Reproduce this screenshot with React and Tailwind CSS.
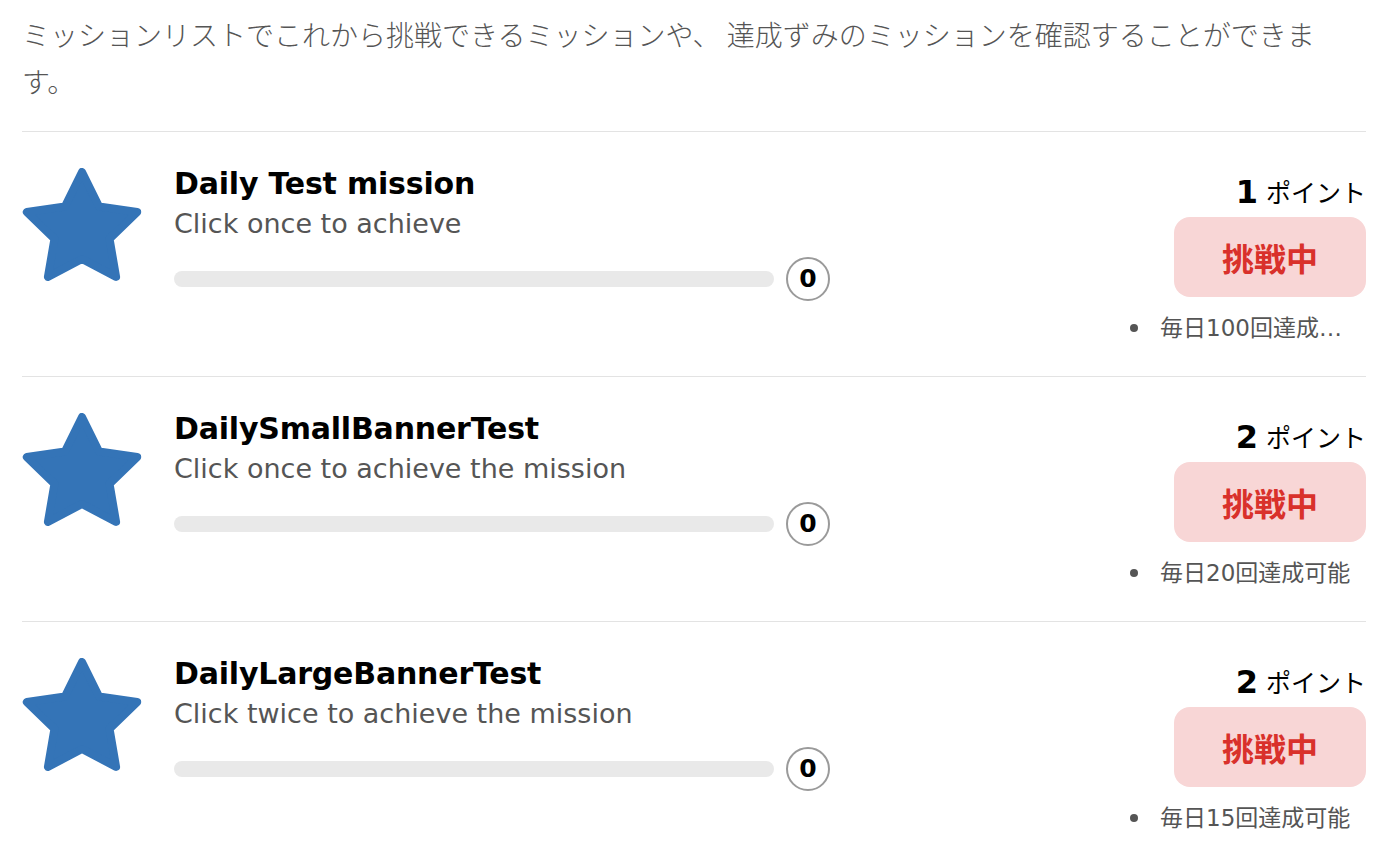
const MISSIONS = [
  { title: 'Daily Test mission', desc: 'Click once to achieve', points: 1, note: '毎日100回達成可能' },
  { title: 'DailySmallBannerTest', desc: 'Click once to achieve the mission', points: 2, note: '毎日20回達成可能' },
  { title: 'DailyLargeBannerTest', desc: 'Click twice to achieve the mission', points: 2, note: '毎日15回達成可能' },
]

const LATIN = { fontFamily: '"DejaVu Sans", "Noto Sans CJK JP", sans-serif' }
const CJK = { fontFamily: '"Noto Sans CJK JP", "DejaVu Sans", sans-serif' }

function Star() {
  return (
    <svg width="120" height="116" viewBox="0 0 120 116" className="shrink-0">
      <polygon
        points="60,4 77.05,38.54 115.16,44.08 87.58,70.96 94.09,108.92 60,91 25.91,108.92 32.42,70.96 4.84,44.08 42.95,38.54"
        fill="#3474b7"
        stroke="#3474b7"
        strokeWidth="8"
        strokeLinejoin="round"
      />
    </svg>
  )
}

function MissionRow({ m }) {
  return (
    <div className="flex items-start border-t border-[#e3e3e3] pt-[34px] pb-[28px]">
      <div className="mt-[2px]">
        <Star />
      </div>

      <div className="ml-8 flex flex-col" style={LATIN}>
        <div className="text-[30px] leading-[36px] font-bold text-black tracking-[-0.2px]">{m.title}</div>
        <div className="text-[27px] leading-[44px] text-[#555]">{m.desc}</div>
        <div className="mt-[11px] flex items-center gap-3">
          <div className="h-4 w-[600px] rounded-full bg-[#e9e9e9]" />
          <div className="flex h-11 w-11 items-center justify-center rounded-full border-2 border-[#9a9a9a] text-[25px] font-bold text-black">
            0
          </div>
        </div>
      </div>

      <div className="ml-auto flex w-[236px] flex-col items-end">
        <div className="flex h-[51px] items-center gap-2">
          <span className="text-[32px] font-bold text-black" style={LATIN}>{m.points}</span>
          <span className="text-[25px] text-black" style={CJK}>ポイント</span>
        </div>
        <div
          className="flex h-20 w-48 items-center justify-center rounded-2xl bg-[#f8d6d6] text-[32px] font-bold text-[#d9312b]"
          style={CJK}
        >
          挑戦中
        </div>
        <ul className="mt-[11px] flex h-10 w-full items-center text-[23px] text-[#555]" style={LATIN}>
          <li className="flex w-full items-center">
            <span className="h-2 w-2 shrink-0 rounded-full bg-[#555]" />
            <span className="ml-[22px] block w-[200px] truncate">{m.note}</span>
          </li>
        </ul>
      </div>
    </div>
  )
}

export default function App() {
  return (
    <div className="min-h-[860px] bg-white px-[22px] pt-[11px]">
      <p className="mb-[26px] text-[28px] leading-[47px] text-[#555] font-light" style={CJK}>
        ミッションリストでこれから挑戦できるミッションや、 達成ずみのミッションを確認することができます。
      </p>
      {MISSIONS.map((m) => (
        <MissionRow key={m.title} m={m} />
      ))}
    </div>
  )
}
